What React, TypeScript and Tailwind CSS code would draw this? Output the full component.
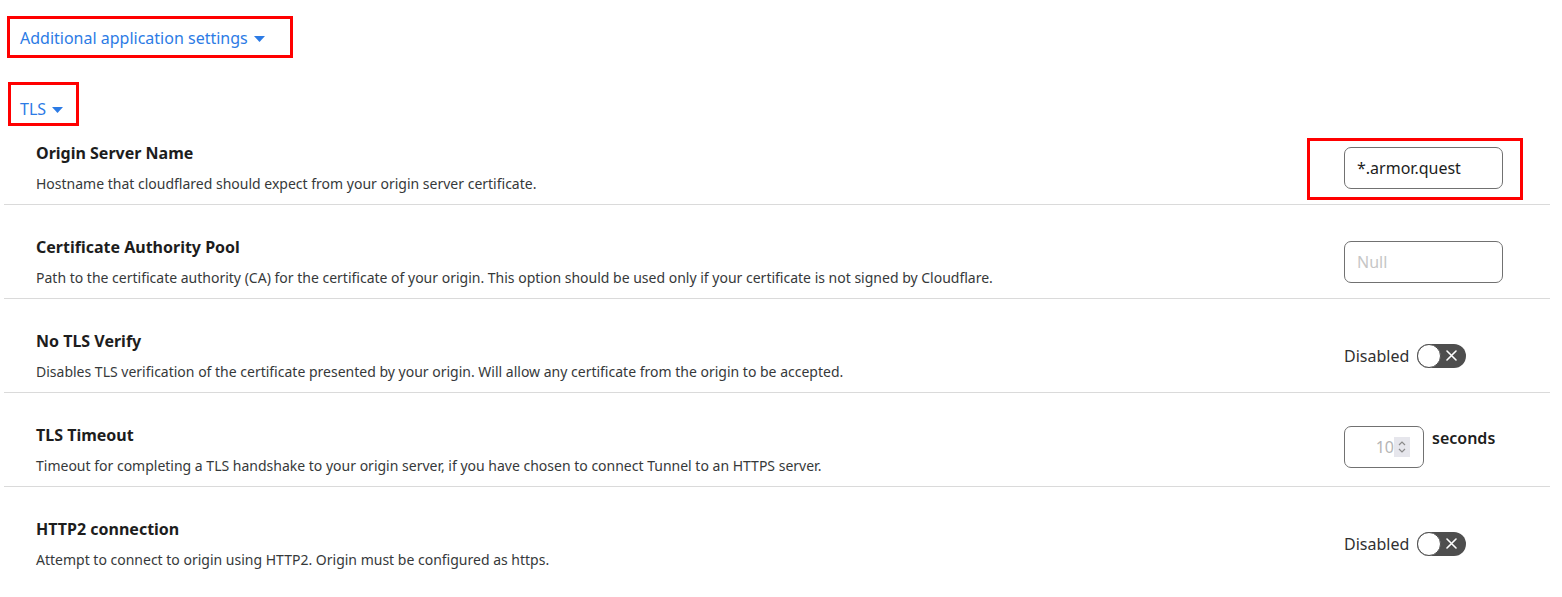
import { ReactNode } from "react"

const font = { fontFamily: '"Noto Sans", "Open Sans", sans-serif' }

function Caret() {
  return (
    <svg width="11" height="6" viewBox="0 0 11 6" className="ml-[6px] mt-[10px]">
      <path d="M0 0h11L5.5 6z" fill="#2c7be5" />
    </svg>
  )
}

function Toggle() {
  return (
    <div className="flex items-center gap-[8px]">
      <span className="text-[16px] text-[#313131] leading-[24px]">Disabled</span>
      <div className="relative w-[49px] h-[24px] rounded-full bg-[#4e4e4e] flex items-center justify-end pr-[9px]">
        <div className="absolute left-0 top-0 w-[24px] h-[24px] rounded-full bg-white border-[1.5px] border-[#4e4e4e]" />
        <svg width="11" height="11" viewBox="0 0 11 11">
          <path d="M1 1l9 9M10 1l-9 9" stroke="#fff" strokeWidth="1.6" strokeLinecap="round" />
        </svg>
      </div>
    </div>
  )
}

function TextInput({ value, placeholder, marked }: { value?: string; placeholder?: string; marked?: boolean }) {
  return (
    <div className="relative w-[159px]">
      {marked && <div className="absolute left-[-37px] top-[-9px] w-[216px] h-[62px] border-[3px] border-[#ff0000]" />}
      <div className="h-[42px] rounded-[7px] border border-[#717171] bg-white flex items-center pl-[12px] text-[16px]">
        {value ? (
          <span className="text-[#1d1d1d]">{value}</span>
        ) : (
          <span className="text-[#c6c6c6]">{placeholder}</span>
        )}
      </div>
    </div>
  )
}

function NumberInput() {
  return (
    <div className="flex items-start gap-[8px]">
      <div className="w-[80px] h-[42px] rounded-[7px] border border-[#717171] bg-white flex items-center justify-end pr-[13px]">
        <span className="text-[16px] text-[#b5b5b5]">10</span>
        <div className="w-[16px] h-[20px] bg-[#e6e6ec] flex items-center justify-center">
          <svg width="8" height="14" viewBox="0 0 8 14">
            <path d="M1 5l3-3 3 3M1 9l3 3 3-3" stroke="#8a8a8a" strokeWidth="1.2" fill="none" />
          </svg>
        </div>
      </div>
      <span className="text-[16px] font-semibold text-[#1d1d1d] leading-[24px]">seconds</span>
    </div>
  )
}

function Row({
  title,
  desc,
  control,
  first,
  last,
  top,
}: {
  title: string
  desc: string
  control: ReactNode
  first?: boolean
  last?: boolean
  top?: boolean
}) {
  return (
    <div
      className={`flex ${top ? "items-start" : "items-center"} ml-[4px] w-[1546px] ${
        first ? "mt-[15px]" : "pt-[30px]"
      } pb-[10px] ${last ? "" : "border-b border-[#dadada]"}`}
    >
      <div className="flex-1 pl-[32px]">
        <div className="text-[16px] font-bold text-[#1d1d1d] leading-[24px]">{title}</div>
        <div className="mt-[9px] text-[14px] text-[#36393a] leading-[20px]">{desc}</div>
      </div>
      <div className={`w-[206px] ${top ? "mt-[3px]" : ""}`}>{control}</div>
    </div>
  )
}

export default function App() {
  return (
    <div className="bg-white w-[1562px] h-[597px] pt-[16px]" style={font}>
      <div className="ml-[7px] w-[286px] h-[42px] border-[3px] border-[#ff0000] flex items-start pl-[10px] pt-[7px]">
        <span className="text-[16px] leading-[24px] text-[#2c7be5]">Additional application settings</span>
        <Caret />
      </div>

      <div className="mt-[24px] ml-[8px] w-[71px] h-[44px] border-[3px] border-[#ff0000] flex items-start pl-[9px] pt-[12px]">
        <span className="text-[16px] leading-[24px] text-[#2c7be5]">TLS</span>
        <Caret />
      </div>

      <Row
        first
        title="Origin Server Name"
        desc="Hostname that cloudflared should expect from your origin server certificate."
        control={<TextInput value="*.armor.quest" marked />}
      />
      <Row
        title="Certificate Authority Pool"
        desc="Path to the certificate authority (CA) for the certificate of your origin. This option should be used only if your certificate is not signed by Cloudflare."
        control={<TextInput placeholder="Null" />}
      />
      <Row
        title="No TLS Verify"
        desc="Disables TLS verification of the certificate presented by your origin. Will allow any certificate from the origin to be accepted."
        control={<Toggle />}
      />
      <Row
        top
        title="TLS Timeout"
        desc="Timeout for completing a TLS handshake to your origin server, if you have chosen to connect Tunnel to an HTTPS server."
        control={<NumberInput />}
      />
      <Row
        last
        title="HTTP2 connection"
        desc="Attempt to connect to origin using HTTP2. Origin must be configured as https."
        control={<Toggle />}
      />
    </div>
  )
}
